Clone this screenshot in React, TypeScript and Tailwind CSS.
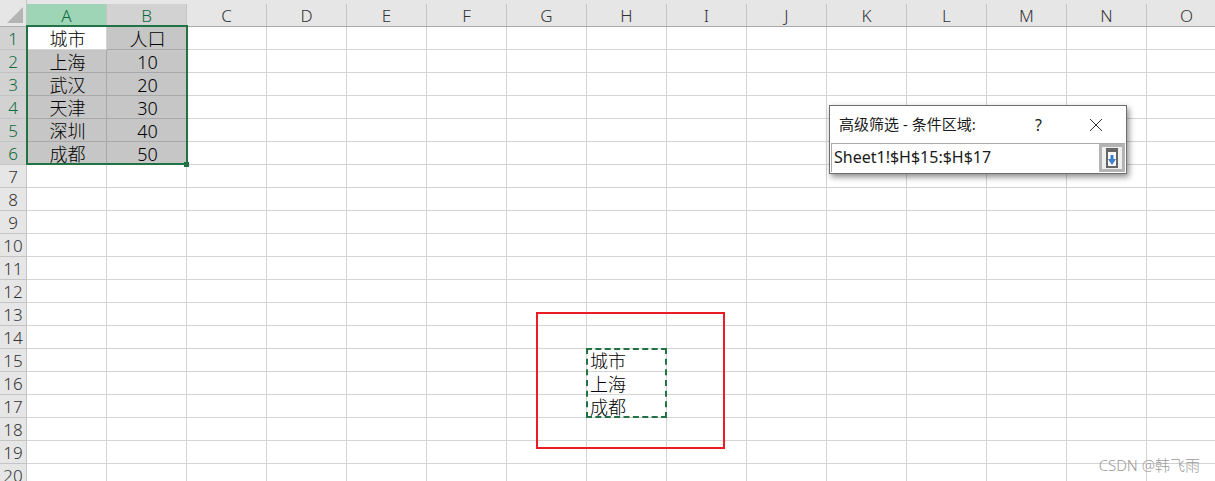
import React from 'react';

const columns = ['A', 'B', 'C', 'D', 'E', 'F', 'G', 'H', 'I', 'J', 'K', 'L', 'M', 'N', 'O'];
const rows = Array.from({ length: 20 }, (_, i) => i + 1);

const cells: Record<string, string> = {
    A1: '城市', B1: '人口',
    A2: '上海', B2: '10',
    A3: '武汉', B3: '20',
    A4: '天津', B4: '30',
    A5: '深圳', B5: '40',
    A6: '成都', B6: '50',
    H15: '城市', H16: '上海', H17: '成都',
};

const isSelected = (col: string, row: number) => (col === 'A' || col === 'B') && row <= 6;

const Cell = ({ col, row }: { col: string; row: number }) => {
    const selected = isSelected(col, row);
    const shaded = selected && !(col === 'A' && row === 1);
    const text = cells[`${col}${row}`];
    return (
        <div
            className={`w-[80px] h-full shrink-0 border-r border-b flex items-center pt-[2px] text-[18px] leading-none text-black ${
                shaded ? 'bg-[#c6c6c6] border-[#a8a8a8]' : 'bg-white border-[#d4d4d4]'
            } ${selected ? 'justify-center pl-[2px]' : 'pl-[3px]'}`}
        >
            {text}
        </div>
    );
};

const DialogIcon = () => (
    <svg width="12" height="20" viewBox="0 0 12 20">
        <rect x="1" y="1" width="10" height="18" fill="#f8f8f8" stroke="#666666" strokeWidth="2" />
        <rect x="1" y="1" width="10" height="3" fill="#666666" />
        <path d="M4.5 7h3v4h2.5L6 17 2 11h2.5z" fill="#3f7fc9" />
    </svg>
);

export default function App() {
    return (
        <div
            className="relative w-[1215px] h-[481px] overflow-hidden bg-white font-light"
            style={{ fontFamily: '"Noto Sans", "Noto Sans CJK SC", sans-serif' }}
        >
            {/* Column headers */}
            <div className="flex h-[27px] bg-[#e6e6e6] border-b border-[#ababab]">
                <div className="w-[27px] shrink-0 border-r border-[#c4c4c4] flex items-end justify-end pr-[3px] pb-[3px]">
                    <svg width="16" height="16" viewBox="0 0 16 16">
                        <path d="M16 0V16H0z" fill="#b4b4b4" />
                    </svg>
                </div>
                {columns.map((col) => (
                    <div
                        key={col}
                        className={`w-[80px] shrink-0 mt-[4px] border-r border-[#c4c4c4] flex items-center justify-center text-[17px] leading-none ${
                            col === 'A'
                                ? 'bg-[#9fd5b7] text-[#0f6b3c]'
                                : col === 'B'
                                  ? 'bg-[#d2d2d2] text-[#0f6b3c]'
                                  : 'text-[#333333]'
                        }`}
                    >
                        {col}
                    </div>
                ))}
            </div>

            {/* Sheet rows */}
            {rows.map((row) => (
                <div key={row} className="flex h-[23px]">
                    <div
                        className={`w-[27px] shrink-0 border-r border-b border-[#c4c4c4] flex items-center justify-center text-[17px] leading-none ${
                            row <= 6 ? 'bg-[#d2d2d2] text-[#0f6b3c]' : 'bg-[#e6e6e6] text-[#333333]'
                        }`}
                    >
                        {row}
                    </div>
                    {columns.map((col) => (
                        <Cell key={col} col={col} row={row} />
                    ))}
                </div>
            ))}

            {/* Selection outline */}
            <div className="absolute left-[26px] top-[25px] w-[162px] h-[140px] border-2 border-[#217346] pointer-events-none" />
            <div className="absolute left-[184px] top-[162px] w-[5px] h-[5px] bg-[#217346]" />

            {/* Marching ants around the criteria range */}
            <div className="absolute left-[586px] top-[348px] w-[81px] h-[70px] border-2 border-dashed border-[#217346] pointer-events-none" />

            {/* Red annotation box */}
            <div className="absolute left-[536px] top-[312px] w-[189px] h-[137px] border-2 border-[#ed1c24] pointer-events-none" />

            {/* Advanced filter range dialog */}
            <div className="absolute left-[829px] top-[105px] w-[298px] h-[69px] bg-white border border-[#6e6e6e] shadow-[2px_3px_6px_rgba(0,0,0,0.45)] flex flex-col">
                <div className="flex items-center h-[37px] pl-[9px] text-[15px] font-normal text-[#1a1a1a]">
                    <span className="w-[196px] shrink-0 whitespace-nowrap">高级筛选 - 条件区域:</span>
                    <span className="w-[54px] shrink-0 text-[16px]">?</span>
                    <svg width="14" height="14" viewBox="0 0 14 14">
                        <path d="M1 1l12 12M13 1L1 13" stroke="#333333" strokeWidth="1" fill="none" />
                    </svg>
                </div>
                <div className="flex flex-1 mx-px mb-px border border-[#ababab] border-b-0 border-r-0">
                    <div className="flex-1 flex items-center pl-[2px] pb-[3px] text-[16px] font-normal text-[#1a1a1a]">Sheet1!$H$15:$H$17</div>
                    <div className="w-[26px] border-[3px] border-[#b4b4b4] bg-[#efefef] flex items-center justify-center">
                        <DialogIcon />
                    </div>
                </div>
            </div>

            {/* Watermark */}
            <div className="absolute right-[15px] top-[454px] text-[15px] text-[#9a9a9a]">CSDN @韩飞雨</div>
        </div>
    );
}
